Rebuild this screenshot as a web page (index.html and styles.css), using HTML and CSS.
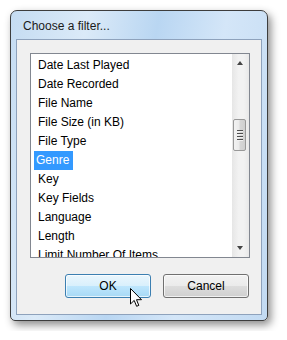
FILE: index.html
```html
<!DOCTYPE html>
<html lang="en">
<head>
    <meta charset="UTF-8">
    <title>Choose a filter...</title>
    <link rel="stylesheet" href="styles.css">
</head>
<body>
    <div class="dialog">
        <div class="dialog-title">Choose a filter...</div>
        <div class="dialog-client">
            <div class="listbox">
                <ul class="list-items">
                    <li>Date Last Played</li>
                    <li>Date Recorded</li>
                    <li>File Name</li>
                    <li>File Size (in KB)</li>
                    <li>File Type</li>
                    <li><span class="selected">Genre</span></li>
                    <li>Key</li>
                    <li>Key Fields</li>
                    <li>Language</li>
                    <li>Length</li>
                    <li>Limit Number Of Items</li>
                </ul>
                <div class="scrollbar">
                    <div class="arrow arrow-up"></div>
                    <div class="track">
                        <div class="thumb">
                            <span></span><span></span><span></span><span></span>
                        </div>
                    </div>
                    <div class="arrow arrow-down"></div>
                </div>
            </div>
            <div class="dialog-buttons">
                <button class="btn btn-hover">OK</button>
                <button class="btn">Cancel</button>
            </div>
        </div>
        <svg class="cursor" width="13" height="20" viewBox="0 0 13 20">
            <path d="M0.5 0.5 L0.5 16 L4.2 12.4 L6.6 18.3 L8.8 17.4 L6.5 11.7 L11.5 11.7 Z" fill="#fff" stroke="#000" stroke-width="1" stroke-linejoin="miter"/>
        </svg>
    </div>
</body>
</html>
```

FILE: styles.css
```css
body {
    margin: 0;
    padding: 10px;
    background-color: #fff;
    font-family: "Liberation Sans", Arial, sans-serif;
    font-size: 12px;
    color: #000;
}
.dialog {
    position: relative;
    width: 258px;
    height: 311px;
    box-sizing: border-box;
    border: 1px solid #3d3d3d;
    border-radius: 7px 7px 5px 5px;
    padding: 0 5px 5px 5px;
    background: linear-gradient(100deg, #c5dcf2 0%, #dbeaf8 25%, #b9d6f2 48%, #d4e6f8 70%, #c2daf2 100%);
    box-shadow: 3px 4px 9px rgba(0, 0, 0, 0.45);
    display: flex;
    flex-direction: column;
}
.dialog-title {
    height: 28px;
    line-height: 30px;
    padding-left: 7px;
    font-size: 12px;
    color: #1a1a1a;
}
.dialog-client {
    flex: 1;
    border: 1px solid #8ea2bc;
    background-color: #f0f0f0;
    padding: 13px 11px 0 13px;
    display: flex;
    flex-direction: column;
}
.listbox {
    width: 220px;
    height: 205px;
    box-sizing: border-box;
    border: 1px solid #828790;
    background-color: #fff;
    display: flex;
    overflow: hidden;
}
.list-items {
    flex: 1;
    list-style: none;
    margin: 0;
    padding: 2px 0 0 5px;
    overflow: hidden;
}
.list-items li {
    height: 19px;
    line-height: 19px;
    white-space: nowrap;
}
.list-items .selected {
    display: inline-block;
    background-color: #3399ff;
    color: #fff;
    padding: 0 4px 0 2px;
    margin-left: -2px;
}
.list-items li:not(:has(.selected)) {
    padding-left: 2px;
}
.scrollbar {
    width: 17px;
    background: linear-gradient(90deg, #e6e6e6 0%, #f2f2f2 40%, #f2f2f2 70%, #e8e8e8 100%);
    display: flex;
    flex-direction: column;
}
.arrow {
    height: 17px;
    position: relative;
}
.arrow::after {
    content: "";
    position: absolute;
    left: 5px;
    border-left: 3.5px solid transparent;
    border-right: 3.5px solid transparent;
}
.arrow-up::after {
    top: 7px;
    border-bottom: 4px solid #444;
}
.arrow-down::after {
    top: 6px;
    border-top: 4px solid #444;
}
.track {
    flex: 1;
    padding-top: 48px;
}
.thumb {
    width: 13px;
    height: 32px;
    margin-left: 1px;
    box-sizing: border-box;
    border: 1px solid #989898;
    border-radius: 2px;
    background: linear-gradient(90deg, #f2f2f2 0%, #ebebeb 45%, #d6d6d6 55%, #cfcfcf 100%);
    display: flex;
    flex-direction: column;
    justify-content: center;
    align-items: center;
    gap: 1px;
}
.thumb span {
    width: 6px;
    height: 1px;
    background-color: #4d4d4d;
    border-bottom: 1px solid #f0f0f0;
}
.dialog-buttons {
    display: flex;
    justify-content: flex-end;
    gap: 12px;
    margin-top: 16px;
    padding-right: 1px;
}
.btn {
    width: 86px;
    height: 24px;
    border: 1px solid #707070;
    border-radius: 3px;
    background: linear-gradient(180deg, #f2f2f2 0%, #ebebeb 49%, #dddddd 51%, #cfcfcf 100%);
    font-family: "Liberation Sans", Arial, sans-serif;
    font-size: 12px;
    color: #000;
    padding: 0;
    box-shadow: inset 0 0 0 1px rgba(255, 255, 255, 0.7);
}
.btn-hover {
    border-color: #3c7fb1;
    background: linear-gradient(180deg, #eaf6fd 0%, #d9f0fc 49%, #bee6fd 51%, #a7d9f5 100%);
}
.cursor {
    position: absolute;
    left: 119px;
    top: 277px;
}
```
